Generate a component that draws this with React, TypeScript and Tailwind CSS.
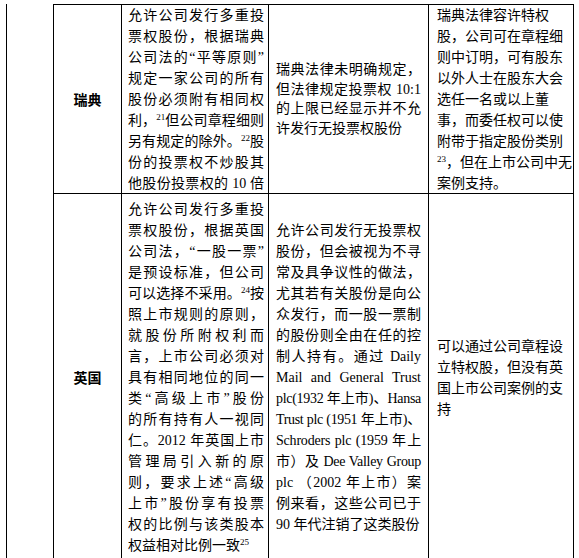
import React from "react";

type Ln = { t: React.ReactNode; j?: boolean; cls?: string };

const Sup = ({ n }: { n: string }) => (
  <span className="relative top-[-5px] text-[9px] leading-none">{n}</span>
);

const Lines = ({ lines, lh }: { lines: Ln[]; lh: string }) => (
  <div className={lh}>
    {lines.map((l, i) => (
      <div
        key={i}
        className={
          (l.j ? "text-justify [text-align-last:justify] " : "text-left ") +
          (l.cls ?? "")
        }
      >
        {l.t}
      </div>
    ))}
  </div>
);

const Cell = ({
  children,
  cls,
}: {
  children: React.ReactNode;
  cls: string;
}) => (
  <div
    className={
      "flex flex-col justify-center border-l border-t border-black " + cls
    }
  >
    {children}
  </div>
);

export default function App() {
  const sw2: Ln[] = [
    { t: "允许公司发行多重投", j: true },
    { t: "票权股份，根据瑞典", j: true },
    { t: "公司法的“平等原则”", j: true },
    { t: "规定一家公司的所有", j: true },
    { t: "股份必须附有相同权", j: true },
    { t: <>利，<Sup n="21" />但公司章程细则</>, j: true },
    { t: <>另有规定的除外。<Sup n="22" />股</>, j: true },
    { t: "份的投票权不炒股其", j: true },
    { t: "他股份投票权的 10 倍", j: true },
  ];
  const sw3: Ln[] = [
    { t: "瑞典法律未明确规定，", j: true },
    { t: "但法律规定投票权 10:1", j: true },
    { t: "的上限已经显示并不允", j: true },
    { t: "许发行无投票权股份" },
  ];
  const sw4: Ln[] = [
    { t: "瑞典法律容许特权" },
    { t: "股，公司可在章程细" },
    { t: "则中订明，可有股东" },
    { t: "以外人士在股东大会" },
    { t: "选任一名或以上董" },
    { t: "事，而委任权可以使" },
    { t: "附带于指定股份类别" },
    { t: <><Sup n="23" />，但在上市公司中无</>, cls: "whitespace-nowrap" },
    { t: "案例支持。" },
  ];
  const uk2: Ln[] = [
    { t: "允许公司发行多重投", j: true },
    { t: "票权股份，根据英国", j: true },
    { t: "公司法，“一股一票”", j: true },
    { t: "是预设标准，但公司", j: true },
    { t: <>可以选择不采用。<Sup n="24" />按</>, j: true },
    { t: "照上市规则的原则，", j: true },
    { t: "就股份所附权利而", j: true },
    { t: "言，上市公司必须对", j: true },
    { t: "具有相同地位的同一", j: true },
    { t: "类“高级上市”股份", j: true },
    { t: "的所有持有人一视同", j: true },
    { t: "仁。2012 年英国上市", j: true },
    { t: "管理局引入新的原", j: true },
    { t: "则，要求上述“高级", j: true },
    { t: "上市”股份享有投票", j: true },
    { t: "权的比例与该类股本", j: true },
    { t: <>权益相对比例一致<Sup n="25" /></> },
  ];
  const uk3: Ln[] = [
    { t: "允许公司发行无投票权", j: true },
    { t: "股份，但会被视为不寻", j: true },
    { t: "常及具争议性的做法，", j: true },
    { t: "尤其若有关股份是向公", j: true },
    { t: "众发行，而一股一票制", j: true },
    { t: "的股份则全由在任的控", j: true },
    { t: "制人持有。通过 Daily", j: true },
    { t: "Mail and General Trust", j: true },
    { t: "plc(1932 年上市)、Hansa", j: true, cls: "tracking-[-0.3px]" },
    { t: "Trust plc (1951 年上市)、", j: true, cls: "tracking-[-0.35px]" },
    { t: "Schroders plc (1959 年上", j: true, cls: "tracking-[-0.2px]" },
    { t: "市）及 Dee Valley Group", j: true, cls: "tracking-[-0.3px]" },
    { t: "plc （2002 年上市）案", j: true },
    { t: "例来看，这些公司已于", j: true },
    { t: "90 年代注销了这类股份" },
  ];
  const uk4: Ln[] = [
    { t: "可以通过公司章程设" },
    { t: "立特权股，但没有英" },
    { t: "国上市公司案例的支" },
    { t: "持" },
  ];

  return (
    <div className="w-[579px] h-[558px] overflow-hidden bg-white text-black text-[14px] font-['Liberation_Serif','Noto_Sans_CJK_SC',serif]">
      <div className="pl-[6px] pt-[4px] grid grid-cols-[47px_68px_147px_160px_146px] grid-rows-[189px_368px]">
        <div className="row-span-2 border-l border-black" />
        <Cell cls="items-center">
          <div className="font-bold leading-[21px] font-['Noto_Sans_CJK_SC',sans-serif]">
            瑞典
          </div>
        </Cell>
        <Cell cls="pl-[6px] pr-[4px]">
          <Lines lines={sw2} lh="leading-[21px]" />
        </Cell>
        <Cell cls="pl-[7px] pr-[7px]">
          <Lines lines={sw3} lh="leading-[19.5px]" />
        </Cell>
        <Cell cls="pl-[8px] pr-0 border-r">
          <Lines lines={sw4} lh="leading-[21px]" />
        </Cell>

        <Cell cls="items-center">
          <div className="font-bold leading-[21px] font-['Noto_Sans_CJK_SC',sans-serif]">
            英国
          </div>
        </Cell>
        <Cell cls="pl-[6px] pr-[4px]">
          <Lines lines={uk2} lh="leading-[21px]" />
        </Cell>
        <Cell cls="pl-[7px] pr-[7px]">
          <Lines lines={uk3} lh="leading-[21px]" />
        </Cell>
        <Cell cls="pl-[8px] pr-0 border-r">
          <Lines lines={uk4} lh="leading-[21px]" />
        </Cell>
      </div>
    </div>
  );
}
